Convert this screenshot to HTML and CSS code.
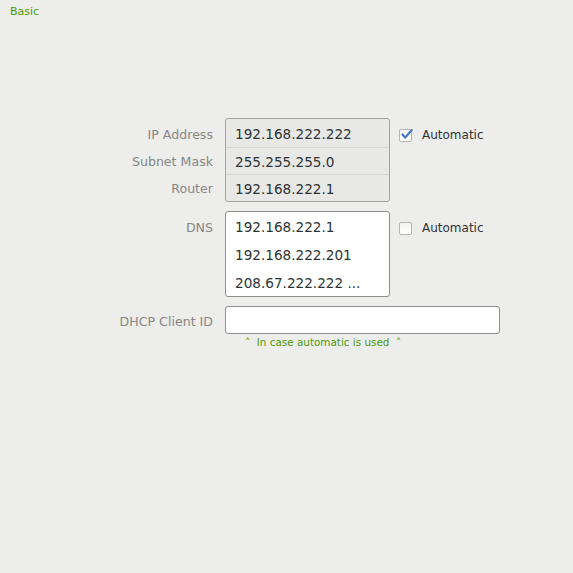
FILE: index.html
```html
<!DOCTYPE html>
<html>
<head>
<meta charset="utf-8">
<link rel="stylesheet" href="styles.css">
</head>
<body>
<div class="page">
  <div class="tab">Basic</div>
  <div class="form">
    <div class="section">
      <div class="labels">
        <div class="label">IP Address</div>
        <div class="label">Subnet Mask</div>
        <div class="label">Router</div>
      </div>
      <div class="box box-gray">
        <div class="row">192.168.222.222</div>
        <div class="row sep">255.255.255.0</div>
        <div class="row sep">192.168.222.1</div>
      </div>
      <div class="check check-first">
        <span class="cb cb-on"><svg width="13" height="13" viewBox="0 0 13 13"><path d="M2.5 6.5 L5.2 9.6 L11.6 2.2" fill="none" stroke="#3f78c4" stroke-width="2.2" stroke-linecap="round" stroke-linejoin="round"/></svg></span>
        <span class="cb-label">Automatic</span>
      </div>
    </div>
    <div class="section">
      <div class="labels">
        <div class="label label-dns">DNS</div>
      </div>
      <div class="box box-white">
        <div class="row">192.168.222.1</div>
        <div class="row">192.168.222.201</div>
        <div class="row">208.67.222.222 ...</div>
      </div>
      <div class="check">
        <span class="cb"></span>
        <span class="cb-label">Automatic</span>
      </div>
    </div>
    <div class="section">
      <div class="labels">
        <div class="label label-dhcp">DHCP Client ID</div>
      </div>
      <div class="field-wrap">
        <div class="input"></div>
        <div class="hint">˄&nbsp; In case automatic is used&nbsp; ˄</div>
      </div>
    </div>
  </div>
</div>
</body>
</html>
```
FILE: styles.css
```css
html, body {
  margin: 0;
  padding: 0;
  background: #ededeb;
}
body {
  font-family: "DejaVu Sans", sans-serif;
  width: 573px;
  height: 573px;
}
.page {
  padding: 5px 0 0 0;
}
.tab {
  padding-left: 10px;
  font-size: 11px;
  line-height: 14px;
  color: #4e9a06;
}
.form {
  margin-top: 99px;
  display: flex;
  flex-direction: column;
  gap: 9px;
}
.section {
  display: flex;
  align-items: flex-start;
}
.labels {
  width: 213px;
  margin-right: 12px;
  display: flex;
  flex-direction: column;
}
.label {
  height: 27px;
  line-height: 33px;
  text-align: right;
  font-size: 12.6px;
  color: #878785;
}
.label-dns {
  line-height: 34px;
}
.label-dhcp {
  line-height: 31px;
}
.box {
  width: 163px;
  border: 1px solid #a3a3a1;
  border-radius: 3px;
  display: flex;
  flex-direction: column;
}
.box-gray {
  background: #e8e8e6;
}
.box-white {
  background: #ffffff;
  border-color: #8e8e8c;
}
.row {
  height: 28px;
  line-height: 31px;
  padding-left: 9px;
  font-size: 13.6px;
  color: #2e3436;
}
.box-gray .row {
  height: 28px;
  line-height: 31px;
}
.box-gray .row.sep {
  border-top: 1px solid #d6d6d4;
  height: 26px;
  line-height: 29px;
}
.check {
  display: flex;
  align-items: center;
  height: 28px;
  margin-left: 9px;
  margin-top: 3px;
}
.check-first {
  margin-top: 3px;
}
.cb {
  width: 11px;
  height: 11px;
  border: 1px solid #b4b4b2;
  border-radius: 2px;
  background: linear-gradient(#f4f4f3, #ffffff);
  position: relative;
}
.cb svg {
  position: absolute;
  left: 0;
  top: -2px;
}
.cb-label {
  margin-left: 10px;
  font-size: 12px;
  color: #2e3436;
}
.field-wrap {
  display: flex;
  flex-direction: column;
}
.input {
  width: 273px;
  height: 26px;
  background: #ffffff;
  border: 1px solid #8e8e8c;
  border-radius: 3px;
}
.hint {
  margin-top: 1px;
  padding-left: 20px;
  font-size: 10.4px;
  line-height: 14px;
  color: #4e9a06;
}
```
